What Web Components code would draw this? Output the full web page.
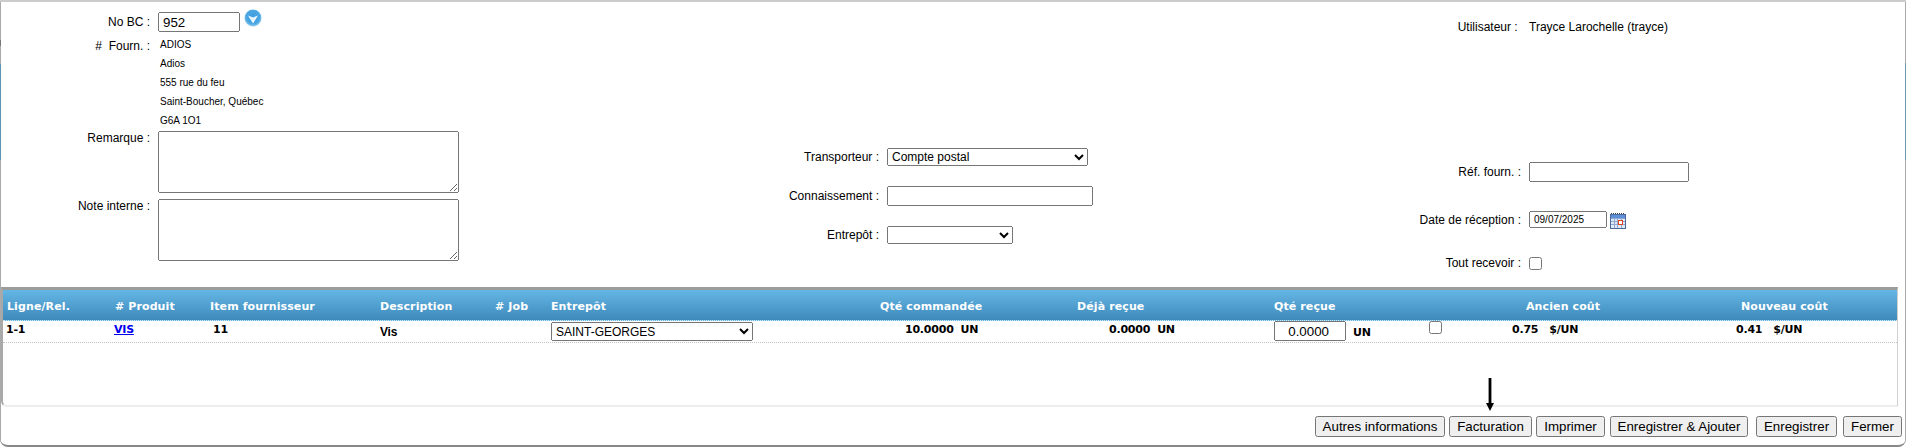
<!DOCTYPE html>
<html lang="fr"><head><meta charset="utf-8"><title>Réception</title>
<style>html,body{margin:0;padding:0;background:#fff}body{font:12px "Liberation Sans",Arial,sans-serif;color:#000;width:1906px;height:447px;overflow:hidden}</style>
</head><body>
<po-window>
  <po-form slot="form"></po-form>
  <po-grid slot="grid"></po-grid>
  <po-actions slot="actions">
    <po-button w="130" gap="0">Autres informations</po-button>
    <po-button w="83" gap="4">Facturation</po-button>
    <po-button w="69" gap="4">Imprimer</po-button>
    <po-button w="138" gap="5">Enregistrer &amp; Ajouter</po-button>
    <po-button w="81" gap="8">Enregistrer</po-button>
    <po-button w="59" gap="6">Fermer</po-button>
  </po-actions>
</po-window>
<script>
function def(name, html){
  customElements.define(name, class extends HTMLElement{
    connectedCallback(){
      if(this.shadowRoot) return;
      const r=this.attachShadow({mode:'open'});
      r.innerHTML=typeof html==='function'?html(this):html;
    }
  });
}
def('po-window',`<style>
:host{display:block;position:relative;box-sizing:border-box;width:1906px;height:447px;padding:0 1px;
 border-top:2px solid #ccc;border-bottom:2px solid #888;border-bottom-left-radius:8px;border-bottom-right-radius:8px;overflow:hidden;
 background:
  linear-gradient(#aaa 0 38px,#777 38px 44px,#aaa 44px 62px,#5b95b3 62px 158px,#aaa 158px) left top/1px 100% no-repeat,
  linear-gradient(#aaa 0 61px,#6f98ac 61px 158px,#aaa 158px) right top/1px 100% no-repeat,#fff}
.arrow{position:absolute;left:1484px;top:376px;width:12px;height:33px}
</style>
<slot name="form"></slot>
<slot name="grid"></slot>
<slot name="actions"></slot>
<svg class="arrow" viewBox="0 0 12 33"><path d="M4.600 0h2.800v25H10L6 33 2 25h2.600z" fill="#000"/></svg>`);

def('po-label',`<style>:host{display:block;text-align:right;font:12px/14px "Liberation Sans",Arial,sans-serif;color:#000;white-space:pre}</style><slot></slot>`);

def('po-field',h=>`<style>:host{display:flex;align-items:center;font:12px "Liberation Sans",Arial,sans-serif;white-space:nowrap}
.l{width:var(--lw);text-align:right;white-space:pre;flex:none}.v{margin-left:8px;display:flex;align-items:flex-start}</style><div class="l">${h.getAttribute('label')}</div><div class="v"><slot></slot></div>`);

def('po-form',`<style>
:host{display:flex;height:285px;font:12px "Liberation Sans",Arial,sans-serif}
.c1{width:700px;flex:none;box-sizing:border-box;display:grid;grid-template-columns:149px 1fr;column-gap:8px;align-content:start;padding-top:10px}
input,textarea,select{margin:0;box-sizing:border-box;font-family:"Liberation Sans",Arial,sans-serif}
.bc{display:flex;align-items:flex-start}
.bc input{width:82px;height:20px;font-size:13.33px;padding:1px 3px}
.bc svg{margin:-3px 0 0 4px;display:block}
.addr{font-size:10px;line-height:19px;padding-left:2px;margin-top:3px;height:95px;margin-bottom:1px;white-space:nowrap}
textarea{display:block;width:301px;height:62px;resize:both}
.ta2{margin-top:6px}
.c2{width:400px;flex:none;box-sizing:border-box;padding-top:146px;--lw:178px}
.c3{flex:1;box-sizing:border-box;padding-top:18px;--lw:420px}
select{height:18px;font-size:12px;padding:0}
.c2 input,.c3 input[type=text]{height:20px}
.date{width:78px;height:17px!important;font-size:10px;padding:1px 3px}
.cal{margin:2px 0 0 3px;display:block}
input[type=checkbox]{margin:0;width:13px;height:13px}
</style>
<div class="c1">
  <po-label style="margin-top:3px">No BC :</po-label>
  <div class="bc"><input value="952"><svg width="18" height="18" viewBox="0 0 18 18"><defs><radialGradient id="g" cx=".5" cy=".45" r=".55"><stop offset="0" stop-color="#3f9fe0"/><stop offset=".72" stop-color="#4aa6e2"/><stop offset="1" stop-color="#9ad2f2"/></radialGradient></defs><circle cx="9" cy="9" r="8.500" fill="url(#g)"/><path d="M4 6.500 9 8.500l5-2-5 8z" fill="#eaf6fd"/></svg></div>
  <po-label style="margin-top:7px">#  Fourn. :</po-label>
  <div class="addr"><div>ADIOS</div><div>Adios</div><div>555 rue du feu</div><div>Saint-Boucher, Québec</div><div>G6A 1O1</div></div>
  <po-label>Remarque :</po-label><div><textarea></textarea></div>
  <po-label style="margin-top:6px">Note interne :</po-label><div class="ta2"><textarea></textarea></div>
</div>
<div class="c2">
  <po-field label="Transporteur :"><select style="width:201px"><option>Compte postal</option></select></po-field>
  <po-field label="Connaissement :" style="margin-top:20px"><input type="text" style="width:206px"></po-field>
  <po-field label="Entrepôt :" style="margin-top:20px"><select style="width:126px"><option></option></select></po-field>
</div>
<div class="c3">
  <po-field label="Utilisateur : " style="height:14px">Trayce Larochelle (trayce)</po-field>
  <po-field label="Réf. fourn. :" style="margin-top:128px"><input type="text" style="width:160px"></po-field>
  <po-field label="Date de réception :" style="margin-top:29px"><input type="text" class="date" value="09/07/2025"><svg class="cal" width="16" height="16" viewBox="0 0 16 16"><rect x=".5" y="1.500" width="15" height="14" fill="#dfe9f8" stroke="#4a6a9c"/><path d="M1 .5h14" stroke="#444" stroke-dasharray="1 1"/><rect x="1" y="2" width="14" height="3" fill="#5f8fd6"/><path d="M1 5.500h14M1 8.500h14M1 11.500h14M4.500 5v10M7.500 5v10M11.500 5v10" stroke="#8fa9d2"/><rect x="8.500" y="7.500" width="4" height="4" fill="#fff" stroke="#e0451f"/></svg></po-field>
  <po-field label="Tout recevoir :" style="margin-top:27px"><input type="checkbox"></po-field>
</div>`);

def('po-grid',`<style>
:host{display:block;box-sizing:border-box;width:1897px;height:120px;border-style:solid;border-width:3px 1.500px 2px 2px;border-color:#9c9c9c #d0d0d0 #ececec #a8a8a8;border-bottom-left-radius:6px;background:#fff}
.t{display:grid;grid-template-columns:109px 95px 170px 115px 56px 327px 197px 198px 235px 225px 1fr}
.h{height:31px;background:linear-gradient(#64b6e5,#3e8abb);border-bottom:1px dotted #cfe3ef;box-sizing:border-box}
.h>div{color:#fff;font:bold 11px/33px "DejaVu Sans",Verdana,sans-serif;white-space:nowrap;letter-spacing:.01em;height:30px}
.b{height:21px;border-bottom:1px dotted #c4c4c4;box-sizing:content-box}
.b>div{font:bold 11px/15px "DejaVu Sans",Verdana,sans-serif;white-space:nowrap;letter-spacing:-.02em;padding-top:1px}
a{color:#00e;text-decoration:underline}
select{margin:0;width:202px;height:19px;font:12px "Liberation Sans",Arial,sans-serif;padding:0;box-sizing:border-box}
input[type=text]{margin:0;box-sizing:border-box;width:72px;height:20px;font:13.33px "Liberation Sans",Arial,sans-serif;text-align:right;padding:1px 15px 1px 2px}
input[type=checkbox]{margin:0;width:13px;height:13px}
.q{display:flex;align-items:flex-start}
</style>
<div class="t h">
<div style="padding-left:4px">Ligne/Rel.</div><div style="padding-left:3px"># Produit</div><div style="padding-left:3px">Item fournisseur</div><div style="padding-left:3px">Description</div><div style="padding-left:3px"># Job</div><div style="padding-left:3px">Entrepôt</div><div style="padding-left:5px">Qté commandée</div><div style="padding-left:5px">Déjà reçue</div><div style="padding-left:4px">Qté reçue</div><div style="padding-left:21px">Ancien coût</div><div style="padding-left:11px">Nouveau coût</div>
</div>
<div class="t b">
<div style="padding-left:3px">1-1</div>
<div style="padding-left:2px"><a href="#">VIS</a></div>
<div style="padding-left:6px">11</div>
<div style="padding-left:3px;padding-top:4px;font-family:'Liberation Sans',Arial,sans-serif;font-size:12px">Vis</div>
<div></div>
<div style="padding-left:3px"><select><option>SAINT-GEORGES</option></select></div>
<div style="padding-left:30px">10.0000<span style="margin-left:7px">UN</span></div>
<div style="padding-left:37px">0.0000<span style="margin-left:7px">UN</span></div>
<div class="q" style="padding-left:4px;padding-top:0"><input type="text" value="0.0000"><span style="margin:4px 0 0 7px">UN</span><input type="checkbox" style="margin:0 0 0 58px"></div>
<div style="padding-left:7px">0.75<span style="margin-left:11px">$/UN</span></div>
<div style="padding-left:6px">0.41<span style="margin-left:11px">$/UN</span></div>
</div>`);

def('po-actions',`<style>:host{display:flex;justify-content:flex-end;padding:9px 3px 0 0}</style><slot></slot>`);
def('po-button',h=>`<style>:host{display:block;margin-left:${h.getAttribute('gap')}px}
button{display:block;box-sizing:border-box;width:${h.getAttribute('w')}px;height:21px;margin:0;padding:0;font:13.33px "Liberation Sans",Arial,sans-serif;white-space:nowrap}</style><button><slot></slot></button>`);
</script>
</body></html>
